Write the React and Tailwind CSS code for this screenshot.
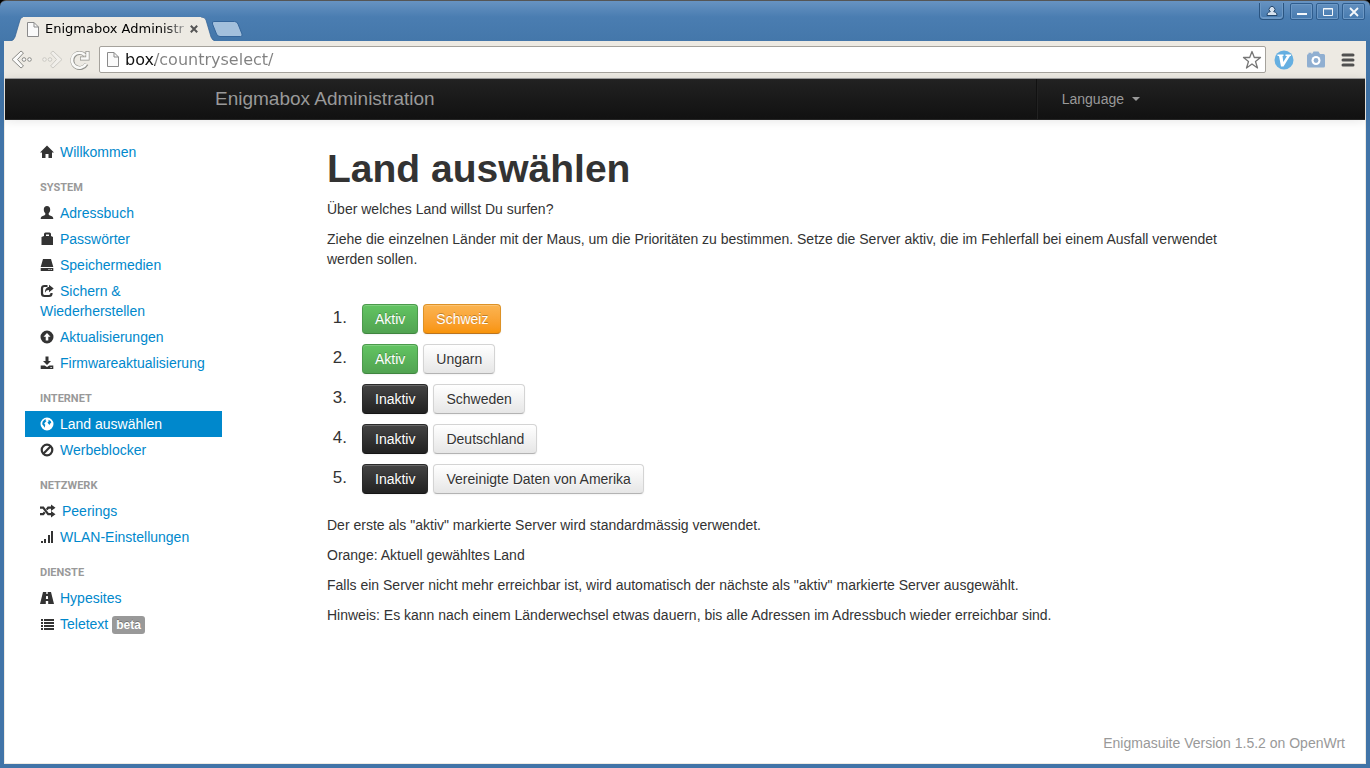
import React from "react";

const ICONS = {
  home: <path d="M7 .5 0 7.500h2V13h3.500V9h3v4H12V7.500h2z" />,
  user: <path d="M7 0c2 0 3.200 1.400 3.200 3.400 0 1.600-.6 3-1.500 3.800v1c0 .7.6 1 2 1.500C12.300 10.300 13.300 10.900 13.300 13H.7c0-2.100 1-2.700 2.600-3.300C4.700 9.200 5.300 8.900 5.300 8.200v-1C4.400 6.400 3.800 5 3.800 3.400 3.800 1.400 5 0 7 0z" />,
  bag: <path fillRule="evenodd" d="M4 4V2Q4 .5 5.500.5h4Q11 .5 11 2V4L13 5V13H1.500V5zM6 4h3V2.400H6z" />,
  disk: <path fillRule="evenodd" d="M3 1h8l2.300 8H.7zM.7 10h12.600v3H.7zM8.500 11v1h1v-1zM10.700 11v1h1v-1z" />,
  share: (
    <>
      <path d="M7.500 2H4.500Q2 2 2 4.500V9.500Q2 12 4.500 12H9Q11.500 12 11.500 9.500V9" fill="none" stroke="currentColor" strokeWidth="2.200" />
      <path d="M9 .8l4.700 3.700L9 8.200V6.100C7 6.100 6 6.800 5 8.800 4.800 5.500 6.500 3 9 3z" />
    </>
  ),
  up: <path fillRule="evenodd" d="M7 .5a6.500 6.500 0 1 0 0 13A6.500 6.500 0 0 0 7 .5zM7 3l3.500 3.700H8.300v3.800H5.700V6.700H3.500z" />,
  download: <path fillRule="evenodd" d="M5.500.5h3v4.500h2.500L7 9 3 5h2.500zM.7 9.500h4L7 11l2.300-1.500h4V13H.7zM10.500 11v1h1.200v-1z" />,
  globe: <path fillRule="evenodd" d="M7 .5a6.500 6.500 0 1 0 0 13A6.500 6.500 0 0 0 7 .5zM4.300 2.800L6 2.300 5.500 3.600 6.500 4 5 5.500 4.200 6.800 5.300 7.800 4.600 10.800 3.500 8.800 2.200 7.300 2.600 4.700zM8.500 2.800l2.200 1.200.6 2-1 .3-.8 1.600L8.200 6.500 7.500 5.500 8.600 4.400z" />,
  ban: (
    <g fill="none" stroke="currentColor" strokeWidth="2.200">
      <circle cx="7" cy="7" r="5.300" />
      <path d="M3.300 10.700l7.400-7.400" />
    </g>
  ),
  random: (
    <>
      <path d="M0 3.700h3.200l5 6.500H12M0 10.200h3.200l1.500-1.900M6.700 5.700 8.200 3.700H12" fill="none" stroke="currentColor" strokeWidth="2.200" />
      <path d="M11 .5l4.500 3.200L11 7zM11 7l4.500 3.200L11 13.500z" />
    </>
  ),
  signal: <path d="M1 11h2v2H1zM4 9h2v4H4zM8 5h2v8H8zM11 1h2v12H11z" />,
  road: <path fillRule="evenodd" d="M3 1h3.300v2h1.400V1H11L14 13H8.200V10H5.800v3H0zM6.100 5l-.2 3h2.200l-.2-3z" />,
  list: <path d="M1 2h2v2H1zM4 2h10v2H4zM1 5h2v2H1zM4 5h10v2H4zM1 8h2v2H1zM4 8h10v2H4zM1 11h2v2H1zM4 11h10v2H4z" />,
};

function Icon({ name, active }) {
  const wide = name === "random";
  return (
    <svg
      aria-hidden="true"
      viewBox={wide ? "0 0 16 14" : "0 0 14 14"}
      className={`mr-1.5 inline-block h-3.5 align-[-2px] ${wide ? "w-4" : "w-3.5"} ${active ? "text-white" : "text-[#333]"}`}
      fill="currentColor"
    >
      {ICONS[name]}
    </svg>
  );
}

const SECTIONS = [
  { items: [["home", "Willkommen"]] },
  {
    title: "SYSTEM",
    items: [
      ["user", "Adressbuch"],
      ["bag", "Passwörter"],
      ["disk", "Speichermedien"],
      ["share", "Sichern & Wiederherstellen"],
      ["up", "Aktualisierungen"],
      ["download", "Firmwareaktualisierung"],
    ],
  },
  { title: "INTERNET", items: [["globe", "Land auswählen"], ["ban", "Werbeblocker"]] },
  { title: "NETZWERK", items: [["random", "Peerings"], ["signal", "WLAN-Einstellungen"]] },
  { title: "DIENSTE", items: [["road", "Hypesites"], ["list", "Teletext", "beta"]] },
];

const COUNTRIES = [
  ["Schweiz", true, true],
  ["Ungarn", true, false],
  ["Schweden", false, false],
  ["Deutschland", false, false],
  ["Vereinigte Daten von Amerika", false, false],
];

const BUTTON =
  "h-[30px] rounded border px-3 leading-5 whitespace-nowrap shadow-[inset_0_1px_0_rgba(255,255,255,0.2),0_1px_2px_rgba(0,0,0,0.05)]";
const TONES = {
  green: "border-[#4b9a4b] border-b-[#3f853f] bg-linear-to-b from-[#62c462] to-[#51a351] text-white [text-shadow:0_-1px_0_rgba(0,0,0,0.25)]",
  orange: "border-[#dd9226] border-b-[#bb7420] bg-linear-to-b from-[#fbb450] to-[#f89406] text-white [text-shadow:0_-1px_0_rgba(0,0,0,0.25)]",
  dark: "border-[#2a2a2a] border-b-[#151515] bg-linear-to-b from-[#444] to-[#222] text-white [text-shadow:0_-1px_0_rgba(0,0,0,0.25)]",
  light: "border-[#d4d4d4] border-b-[#b3b3b3] bg-linear-to-b from-white to-[#e6e6e6] text-[#333] [text-shadow:0_1px_1px_rgba(255,255,255,0.75)]",
};

function PageIcon() {
  return (
    <svg aria-hidden="true" viewBox="0 0 12 15" className="h-[15px] w-3 shrink-0" fill="#fafafa" stroke="#8b8b8b">
      <path d="M.5.5h6.500l4.500 4.500v9.500H.5z" />
      <path d="M7 .5V5h4.500" fill="none" />
    </svg>
  );
}

function WindowButton({ label, children }) {
  return (
    <button aria-label={label} className="flex h-[17px] w-[23px] items-center justify-center rounded-xs border border-[#2f5d8e] shadow-[inset_0_0_0_1px_#6c98c5]">
      {children}
    </button>
  );
}

function TitleBar() {
  return (
    <header className="flex h-[41px] items-end justify-between rounded-t-md border-t border-[#555] bg-linear-to-b from-[#6793c2] via-[#4a7db1] via-40% to-[#4477aa] pl-[11px]">
      <div className="flex items-end">
        <div className="flex h-6 items-stretch">
          <svg aria-hidden="true" viewBox="0 0 12 24" className="h-6 w-3">
            <path d="M0 24Q3 23 4 20L9 3Q10 0 12 0V24z" fill="#edeae3" />
            <path d="M0 24Q3 23 4 20L9 3Q10 0 12 0" fill="none" stroke="#2f5f93" strokeWidth=".7" />
          </svg>
          <div className="flex items-center bg-[#edeae3] pl-1">
            <PageIcon />
            <span className="ml-1.5 w-[142px] bg-linear-to-r from-black from-80% to-[#bbb] bg-clip-text font-['DejaVu_Sans','Noto_Sans',sans-serif] text-[13px] leading-5 whitespace-nowrap text-transparent">
              Enigmabox Administr
            </span>
            <button aria-label="Tab schliessen" className="flex size-3.5 items-center justify-center">
              <svg viewBox="0 0 8 8" className="size-2" stroke="#555" strokeWidth="2">
                <path d="M.8.8l6.400 6.400M7.200.8.8 7.200" />
              </svg>
            </button>
          </div>
          <svg aria-hidden="true" viewBox="0 0 14 24" className="h-6 w-3.5">
            <path d="M0 0Q4 0 5 3L10 20Q11 23 14 24H0z" fill="#edeae3" />
            <path d="M0 0Q4 0 5 3L10 20Q11 23 14 24" fill="none" stroke="#2f5f93" strokeWidth=".7" />
          </svg>
        </div>
        <button aria-label="Neuer Tab" className="mb-1 -ml-1">
          <svg viewBox="0 0 32 16" className="block h-4 w-8" fill="#a3c0dc" stroke="#34659a">
            <path d="M3 .5h20.500q2.500 0 3.500 2.500l4 10q.8 2.500-1.500 2.500H9q-2.500 0-3.500-2.500l-4-10Q.7.500 3 .5z" />
          </svg>
        </button>
      </div>
      <div className="flex items-start gap-[3px] self-start pt-0.5">
        <button aria-label="Profil" className="mr-[3px] flex h-[17px] w-[25px] items-center justify-center rounded-b border border-t-0 border-[#2a5480] shadow-[inset_0_-1px_0_1px_#6c98c5]">
          <svg viewBox="0 0 12 12" className="size-3" fill="#d5e1ee" stroke="#24476d">
            <path d="M1 10.500C1 8 2 7 4.300 6.700a2.900 2.900 0 1 1 3.400 0C10 7 11 8 11 10.500z" />
          </svg>
        </button>
        <div className="flex gap-[3px] pr-[5px]">
          <WindowButton label="Minimieren">
            <svg viewBox="0 0 12 12" className="size-3"><path d="M1 8h10" stroke="#f5f8fb" strokeWidth="2" /></svg>
          </WindowButton>
          <WindowButton label="Maximieren">
            <svg viewBox="0 0 12 12" className="size-3" fill="none" stroke="#f5f8fb"><path d="M1.500 2.500h9v7h-9zM1 3h10" /></svg>
          </WindowButton>
          <WindowButton label="Schliessen">
            <svg viewBox="0 0 12 12" className="size-3" stroke="#f5f8fb" strokeWidth="1.800"><path d="M2 2l8 8M10 2l-8 8" /></svg>
          </WindowButton>
        </div>
      </div>
    </header>
  );
}

function Arrow({ flip }) {
  return (
    <svg viewBox="0 0 22 20" className={`h-5 w-[22px] ${flip ? "-scale-x-100 opacity-35" : ""}`} fill="#fbfbfa" stroke="#8a8a86">
      <path d="M10 1l2.500 2L6.500 9.500l6 6.500-2.500 2L1 9.500z" />
      <circle cx="13" cy="9.500" r="1.800" />
      <circle cx="18.500" cy="9.500" r="1.800" />
    </svg>
  );
}

function Toolbar() {
  return (
    <div className="flex h-[37px] items-center bg-[#edeae3] pr-2 pl-1.5">
      <button aria-label="Zurück"><Arrow /></button>
      <button aria-label="Vorwärts" className="ml-2"><Arrow flip /></button>
      <button aria-label="Neu laden" className="ml-1.5">
        <svg viewBox="0 0 22 22" className="size-[22px]" fill="none">
          <path d="M17.500 15A7.500 7.500 0 1 1 16 6M18.500 2v7.500h-7.500" stroke="#92928d" strokeWidth="4" />
          <path d="M17 14.800A7.500 7.500 0 1 1 16 6.200M18.500 2.700v6.800h-6.800" stroke="#fafaf8" strokeWidth="2.600" />
        </svg>
      </button>
      <div className="ml-2 flex h-[27px] flex-1 items-center rounded-xs border border-[#a5a29c] bg-white pr-[3px] pl-[7px]">
        <PageIcon />
        <input
          aria-label="Adresse"
          defaultValue="box/countryselect/"
          className="ml-1.5 h-6 min-w-0 flex-1 bg-[linear-gradient(to_right,#111_30px,#808080_30px)] bg-clip-text font-['DejaVu_Sans','Noto_Sans',sans-serif] text-[16px] text-transparent outline-none"
        />
        <button aria-label="Lesezeichen">
          <svg viewBox="0 0 20 20" className="size-5" fill="white" stroke="#777" strokeWidth="1.300" strokeLinejoin="round">
            <path d="M10 1.500l2.300 6h6.200l-5 4 2 6.500-5.500-4-5.500 4 2-6.500-5-4h6.200z" />
          </svg>
        </button>
      </div>
      <button aria-label="Vimium" className="ml-2">
        <svg viewBox="0 0 20 20" className="size-5">
          <circle cx="10" cy="10" r="9.500" fill="#65afe1" />
          <path d="M3.500 4.500h6v1.500h-1l.8 6L13 6h-1.500V4.500H17V6h-1L9.500 16.500H7L5 6H3.500z" fill="#fff" />
        </svg>
      </button>
      <button aria-label="Screenshot" className="ml-3">
        <svg viewBox="0 0 20 18" className="h-[18px] w-5" fill="#90afd1">
          <path d="M2.500 3V1.800h3V3H6l1.500-2.500h5L14 3h3.500Q19 3 19 4.500v10.500q0 1.500-1.500 1.500h-15Q1 16.500 1 15V4.500Q1 3 2.500 3z" />
          <circle cx="10" cy="9.500" r="4.500" fill="#fff" />
          <circle cx="10" cy="9.500" r="2.400" />
        </svg>
      </button>
      <button aria-label="Menü" className="ml-3.5 pr-px">
        <svg viewBox="0 0 16 16" className="size-4" stroke="#505050" strokeWidth="3" strokeLinecap="round">
          <path d="M3 3h10M3 8h10M3 13h10" />
        </svg>
      </button>
    </div>
  );
}

function Sidebar() {
  return (
    <nav className="w-[15%] max-w-[197px] min-w-[180px] shrink-0">
      {SECTIONS.map((section, i) => (
        <section key={i} className={section.title ? "mt-[9px]" : ""}>
          {section.title && (
            <h2 className="px-[15px] pt-1 pb-0.5 font-[Roboto,'Liberation_Sans',sans-serif] text-[11px] leading-5 font-bold text-[#999]">{section.title}</h2>
          )}
          <ul>
            {section.items.map(([icon, label, badge]) => {
              const active = label === "Land auswählen";
              return (
                <li key={label}>
                  <a href="#" className={`block py-[3px] pl-[15px] ${active ? "bg-[#0088cc] text-white" : "text-[#0088cc]"}`}>
                    <Icon name={icon} active={active} />
                    {label}
                    {badge && (
                      <span className="ml-1 inline-block rounded-[3px] bg-[#999] px-1 text-xs leading-[18px] font-bold text-white [text-shadow:0_-1px_0_rgba(0,0,0,0.25)]">
                        {badge}
                      </span>
                    )}
                  </a>
                </li>
              );
            })}
          </ul>
        </section>
      ))}
    </nav>
  );
}

export default function App() {
  return (
    <div className="flex min-h-screen flex-col bg-black font-['Liberation_Sans',Arial,sans-serif] text-[14px] leading-5 text-[#333]">
      <TitleBar />
      <div className="flex flex-1 flex-col border-x-4 border-b-4 border-[#4174a8] bg-white">
        <div className="flex flex-1 flex-col border-x border-b border-[#edeae3]">
          <Toolbar />
          <div className="border-t border-b border-t-[#999] border-b-[#252525] bg-linear-to-b from-[#222] to-[#111] text-[#999] shadow-[0_1px_10px_rgba(0,0,0,0.1)]">
            <div className="mx-auto flex h-10 max-w-[940px] items-stretch justify-between">
              <a href="#" className="py-2.5 text-[19px]">Enigmabox Administration</a>
              <div className="flex border-l border-[#111] pl-2.5 shadow-[inset_1px_0_0_#222]">
                <button className="flex items-center px-[15px]">
                  Language
                  <span className="ml-2 border-x-4 border-t-4 border-x-transparent border-t-[#999]" />
                </button>
              </div>
            </div>
          </div>
          <div className="flex flex-1 px-5 pt-[19px]">
            <Sidebar />
            <div className="ml-7 flex flex-1 flex-col">
              <main className="pt-2.5 pr-[84px] pl-[77px]">
                <h1 className="text-[39px] leading-10 font-bold">Land auswählen</h1>
                <p className="mt-2.5">Über welches Land willst Du surfen?</p>
                <p className="mt-2.5">
                  Ziehe die einzelnen Länder mit der Maus, um die Prioritäten zu bestimmen. Setze die Server aktiv, die im Fehlerfall bei einem Ausfall verwendet werden sollen.
                </p>
                <ol className="mt-[35px] flex flex-col gap-2.5">
                  {COUNTRIES.map(([name, on, current], i) => (
                    <li key={name} className="flex items-center gap-[5px]">
                      <span className="mr-2.5 w-5 pb-0.5 text-right text-[17px]">{i + 1}.</span>
                      <button className={`${BUTTON} ${on ? TONES.green : TONES.dark}`}>{on ? "Aktiv" : "Inaktiv"}</button>
                      <button className={`${BUTTON} ${current ? TONES.orange : TONES.light}`}>{name}</button>
                    </li>
                  ))}
                </ol>
                <div className="mt-[21px] flex flex-col gap-2.5">
                  <p>Der erste als "aktiv" markierte Server wird standardmässig verwendet.</p>
                  <p>Orange: Aktuell gewähltes Land</p>
                  <p>Falls ein Server nicht mehr erreichbar ist, wird automatisch der nächste als "aktiv" markierte Server ausgewählt.</p>
                  <p>Hinweis: Es kann nach einem Länderwechsel etwas dauern, bis alle Adressen im Adressbuch wieder erreichbar sind.</p>
                </div>
              </main>
              <footer className="mt-auto pb-2.5 text-right text-[#999]">Enigmasuite Version 1.5.2 on OpenWrt</footer>
            </div>
          </div>
        </div>
      </div>
    </div>
  );
}
